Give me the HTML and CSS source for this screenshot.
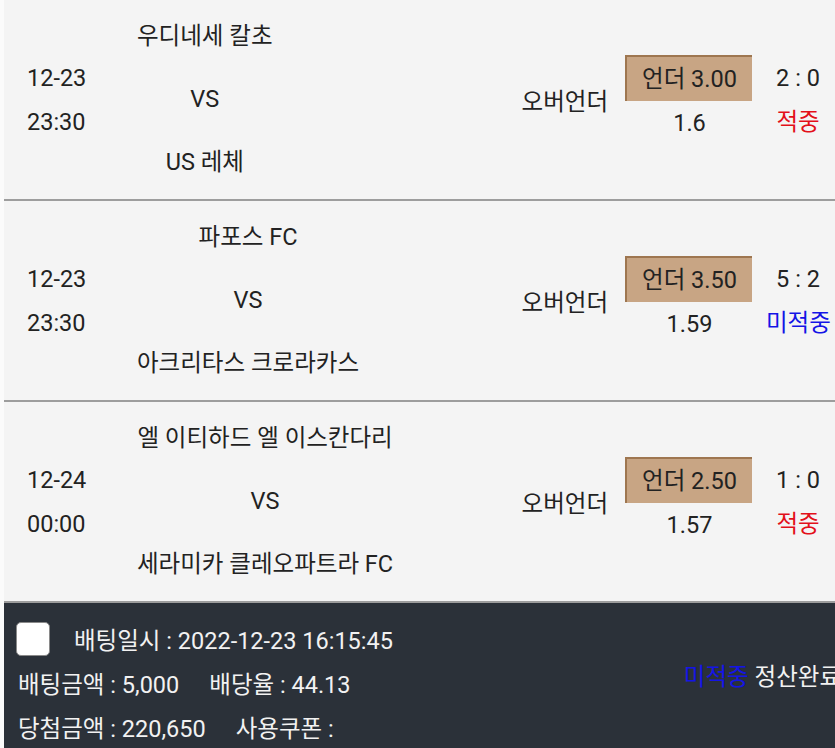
FILE: index.html
```html
<!DOCTYPE html>
<html lang="ko">
<head>
<meta charset="utf-8">
<title>배팅내역</title>
<link rel="stylesheet" href="styles.css">
</head>
<body>
<div class="list">
  <div class="row">
    <div class="date"><div>12-23</div><div>23:30</div></div>
    <div class="teams"><div>우디네세 칼초</div><div>VS</div><div>US 레체</div></div>
    <div class="spacer"></div>
    <div class="type">오버언더</div>
    <div class="pick"><div class="box">언더 3.00</div><div class="odds">1.6</div></div>
    <div class="result"><div>2 : 0</div><div class="hit">적중</div></div>
  </div>
  <div class="row">
    <div class="date"><div>12-23</div><div>23:30</div></div>
    <div class="teams"><div>파포스 FC</div><div>VS</div><div>아크리타스 크로라카스</div></div>
    <div class="spacer"></div>
    <div class="type">오버언더</div>
    <div class="pick"><div class="box">언더 3.50</div><div class="odds">1.59</div></div>
    <div class="result"><div>5 : 2</div><div class="miss">미적중</div></div>
  </div>
  <div class="row">
    <div class="date"><div>12-24</div><div>00:00</div></div>
    <div class="teams"><div>엘 이티하드 엘 이스칸다리</div><div>VS</div><div>세라미카 클레오파트라 FC</div></div>
    <div class="spacer"></div>
    <div class="type">오버언더</div>
    <div class="pick"><div class="box">언더 2.50</div><div class="odds">1.57</div></div>
    <div class="result"><div>1 : 0</div><div class="hit">적중</div></div>
  </div>
  <div class="footer">
    <div class="info">
      <div class="line first"><span class="check"></span><span>배팅일시 : 2022-12-23 16:15:45</span></div>
      <div class="line"><span>배팅금액 : 5,000</span><span class="gap">배당율 : 44.13</span></div>
      <div class="line"><span>당첨금액 : 220,650</span><span class="gap">사용쿠폰 :</span></div>
    </div>
    <div class="status"><span class="miss">미적중</span> 정산완료</div>
  </div>
</div>
</body>
</html>
```
FILE: styles.css
```css
html, body {
  margin: 0;
  padding: 0;
}
body {
  background: #fbfbfb;
  font-family: Roboto, "Noto Sans CJK KR", sans-serif;
  font-size: 23.5px;
  color: #222;
  width: 835px;
  height: 748px;
  overflow: hidden;
}
.list {
  padding-left: 4px;
}
.row {
  display: flex;
  align-items: center;
  height: 199px;
  background: #f4f4f4;
  border-bottom: 2px solid #9d9d9d;
}
.date {
  width: 110px;
  padding-left: 23px;
  line-height: 44px;
  flex: none;
}
.teams {
  text-align: center;
  line-height: 63px;
  white-space: nowrap;
  flex: none;
}
.spacer {
  flex: 1;
}
.type {
  margin-right: 19px;
  white-space: nowrap;
}
.pick {
  width: 125px;
  margin-right: 14px;
  text-align: center;
  flex: none;
}
.box {
  height: 44px;
  line-height: 44px;
  background: #c8a584;
  border-top: 2px solid #9e7650;
  border-left: 2px solid #9e7650;
  margin-left: -2px;
}
.odds {
  line-height: 44px;
}
.result {
  width: 64px;
  margin-right: 5px;
  text-align: center;
  line-height: 44px;
  flex: none;
  white-space: nowrap;
}
.hit {
  color: #e3101a;
}
.miss {
  color: #1414e6;
}
.footer {
  display: flex;
  background: #2b3139;
  color: #f2f2f2;
  height: 146px;
  box-sizing: border-box;
  padding: 14px 0 0 14px;
  overflow: hidden;
}
.info {
  flex: none;
}
.line {
  display: flex;
  align-items: center;
  height: 44px;
  white-space: nowrap;
}
.line.first {
  margin-left: -2px;
}
.check {
  width: 32px;
  height: 32px;
  background: #fff;
  border: 1px solid #8a8a8a;
  border-radius: 5px;
  margin-right: 24px;
}
.gap {
  margin-left: 30px;
}
.status {
  margin-left: auto;
  margin-right: -6px;
  align-self: center;
  padding-bottom: 16px;
  white-space: nowrap;
}
```
